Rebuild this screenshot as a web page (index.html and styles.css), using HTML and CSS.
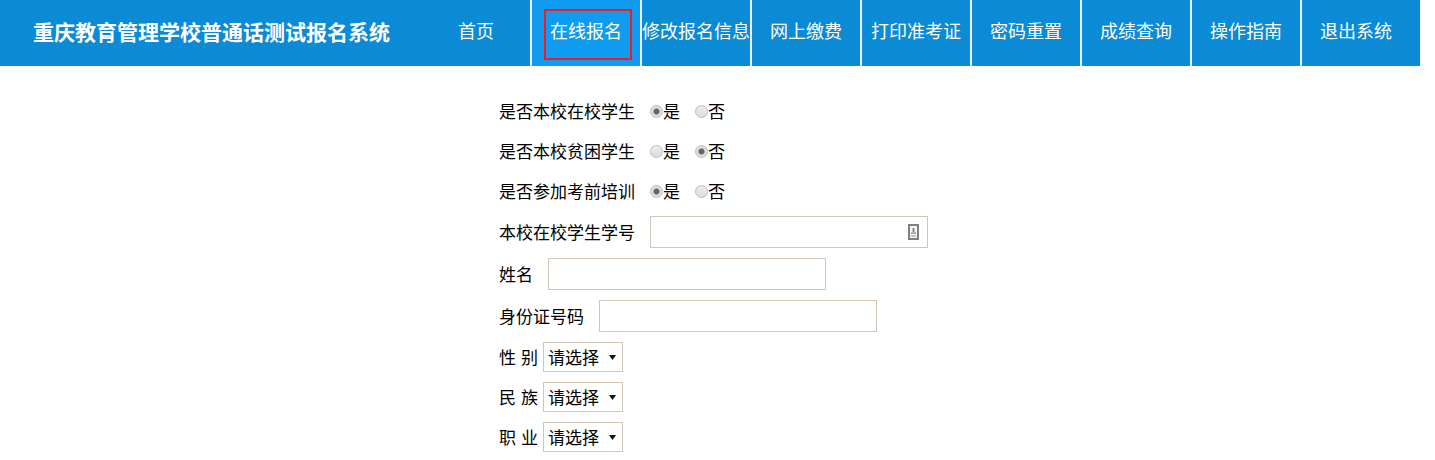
FILE: index.html
```html
<!DOCTYPE html>
<html lang="zh-CN">

<head>
    <meta charset="UTF-8">
    <meta name="viewport" content="width=device-width, initial-scale=1.0">
    <title>普通话测试报名系统</title>
    <link rel="stylesheet" href="styles.css">
</head>

<body>
    <div id="header">
        <h1 class="logo">重庆教育管理学校普通话测试报名系统</h1>
        <ul id="nav">
            <li><a href="#">首页</a></li>
            <li class="active"><a href="#">在线报名</a></li>
            <li><a href="#">修改报名信息</a></li>
            <li><a href="#">网上缴费</a></li>
            <li><a href="#">打印准考证</a></li>
            <li><a href="#">密码重置</a></li>
            <li><a href="#">成绩查询</a></li>
            <li><a href="#">操作指南</a></li>
            <li><a href="#">退出系统</a></li>
        </ul>
    </div>

    <form id="signup">
        <div class="row">
            <label class="name">是否本校在校学生</label>
            <label class="choice"><input type="radio" name="inSchool" checked><span>是</span></label>
            <label class="choice"><input type="radio" name="inSchool"><span>否</span></label>
        </div>
        <div class="row">
            <label class="name">是否本校贫困学生</label>
            <label class="choice"><input type="radio" name="poor"><span>是</span></label>
            <label class="choice"><input type="radio" name="poor" checked><span>否</span></label>
        </div>
        <div class="row">
            <label class="name">是否参加考前培训</label>
            <label class="choice"><input type="radio" name="train" checked><span>是</span></label>
            <label class="choice"><input type="radio" name="train"><span>否</span></label>
        </div>
        <div class="row row-input">
            <label class="name">本校在校学生学号</label>
            <span class="input-wrap">
                <input type="text" class="text">
                <svg class="card-icon" width="11" height="16" viewBox="0 0 11 16">
                    <rect x="1" y="1" width="9" height="14" fill="#f6f6f6" stroke="#808080" stroke-width="2"/>
                    <rect x="4.5" y="4" width="2" height="4" fill="#8a8a8a"/>
                    <rect x="3" y="8" width="5" height="2" fill="#b0b0b0"/>
                    <rect x="3" y="11" width="5" height="2" fill="#c4c4c4"/>
                </svg>
            </span>
        </div>
        <div class="row row-input">
            <label class="name">姓名</label>
            <input type="text" class="text">
        </div>
        <div class="row row-input">
            <label class="name">身份证号码</label>
            <input type="text" class="text">
        </div>
        <div class="row row-select">
            <label class="name-short">性 别</label>
            <select class="pick"><option>请选择</option></select>
        </div>
        <div class="row row-select">
            <label class="name-short">民 族</label>
            <select class="pick"><option>请选择</option></select>
        </div>
        <div class="row row-select">
            <label class="name-short">职 业</label>
            <select class="pick"><option>请选择</option></select>
        </div>
    </form>
</body>

</html>
```

FILE: styles.css
```css
* {
    margin: 0;
    padding: 0;
    box-sizing: border-box;
}

body {
    font-family: "Noto Sans CJK SC", "Liberation Sans", sans-serif;
    font-size: 17px;
    color: #000;
    background-color: #fff;
    overflow: hidden;
}

#header {
    display: flex;
    width: 1420px;
    height: 66px;
    background-color: #0b8ad6;
}

.logo {
    width: 422px;
    padding-left: 33px;
    font-size: 21px;
    line-height: 63px;
    font-weight: bold;
    color: #fff;
    white-space: nowrap;
}

#nav {
    display: flex;
    list-style: none;
}

#nav li {
    position: relative;
    width: 110px;
    border-right: 2px solid #eee;
}

#nav li:last-child {
    border-right: 0;
}

#nav a {
    display: block;
    width: 108px;
    font-size: 18px;
    line-height: 61px;
    text-align: center;
    color: #fff;
    text-decoration: none;
    white-space: nowrap;
}

#nav .active {
    background-color: #0e9bf0;
}

/* 红框盖在当前菜单上面 */
#nav .active::after {
    content: "";
    box-sizing: border-box;
    position: absolute;
    left: 12px;
    top: 9px;
    width: 88px;
    height: 51px;
    border: 2px solid #ee1c25;
}

#signup {
    padding: 25px 0 0 499px;
}

.row {
    display: flex;
    align-items: center;
    height: 40px;
}

.name,
.name-short,
.choice span {
    padding-bottom: 2px;
}

.name {
    margin-right: 15px;
}

.choice {
    display: flex;
    align-items: center;
    width: 45px;
}

.choice input {
    appearance: none;
    width: 13px;
    height: 13px;
    border: 1px solid #bdbdbd;
    border-radius: 50%;
    background: linear-gradient(#eee, #dcdcdc);
}

.choice input:checked {
    background: radial-gradient(circle, #666 0, #666 2.5px, #dedede 3.5px);
}

.row-input {
    height: 42px;
}

.text {
    width: 278px;
    height: 32px;
    border: 1px solid #d2c6b9;
    background-color: #fff;
}

.input-wrap {
    position: relative;
    display: flex;
}

.card-icon {
    position: absolute;
    right: 9px;
    top: 8px;
}

.name-short {
    width: 44px;
    word-spacing: 1.2px;
}

.pick {
    appearance: none;
    width: 80px;
    height: 30px;
    padding: 0 0 2px 4px;
    border: 1px solid #d2c6b9;
    font-family: inherit;
    font-size: 17px;
    color: #000;
    background: #fff url("data:image/svg+xml,%3Csvg xmlns='http://www.w3.org/2000/svg' width='7' height='5'%3E%3Cpath d='M0 0h7L3.5 5z' fill='%23111'/%3E%3C/svg%3E") no-repeat 65px 12px;
}
```
